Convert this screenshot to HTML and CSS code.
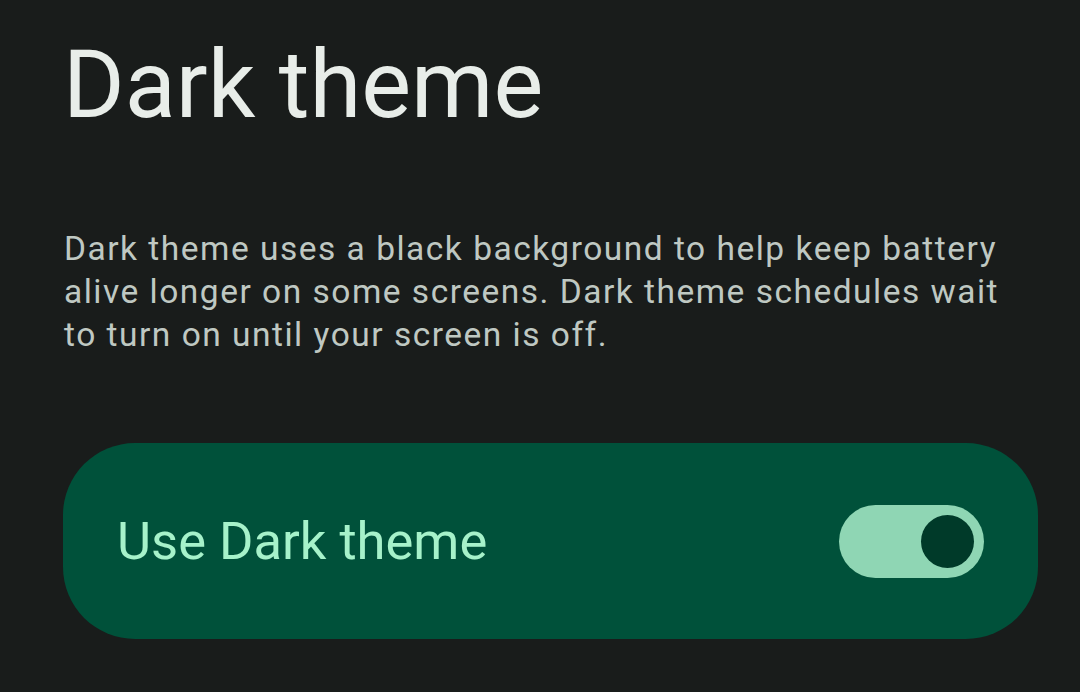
FILE: index.html
```html
<!DOCTYPE html>
<html lang="en">
<head>
  <meta charset="UTF-8">
  <title>Dark theme</title>
  <link rel="stylesheet" href="styles.css">
</head>
<body>
  <div class="page">
    <h1 class="title">Dark theme</h1>
    <p class="summary">
      Dark theme uses a black background to help keep battery
      alive longer on some screens. Dark theme schedules wait
      to turn on until your screen is off.
    </p>
    <div class="switch-card">
      <span class="switch-label">Use Dark theme</span>
      <div class="switch on">
        <div class="thumb"></div>
      </div>
    </div>
  </div>
</body>
</html>
```

FILE: styles.css
```css
body {
  margin: 0;
  background-color: #191c1b;
  font-family: Roboto, "Noto Sans", sans-serif;
}
.page {
  padding: 0 42px 0 63px;
}
.title {
  margin: 0;
  padding-top: 29px;
  font-size: 94px;
  font-weight: 400;
  line-height: 112px;
  color: #e8ede9;
}
.summary {
  margin: 86px 0 0 1px;
  font-size: 33.5px;
  line-height: 43px;
  letter-spacing: 1.5px;
  color: #bfc8c2;
}
.switch-card {
  margin-top: 87px;
  height: 196px;
  background-color: #00513a;
  border-radius: 72px;
  display: flex;
  align-items: center;
  justify-content: space-between;
  padding: 0 54px 0 54px;
}
.switch-label {
  font-size: 52.5px;
  color: #a6f2ca;
}
.switch {
  width: 145px;
  height: 73px;
  border-radius: 37px;
  background-color: #8fd6b4;
  display: flex;
  align-items: center;
  justify-content: flex-end;
  padding: 0 10px;
  box-sizing: border-box;
}
.thumb {
  width: 53px;
  height: 53px;
  border-radius: 50%;
  background-color: #003a29;
}
```
